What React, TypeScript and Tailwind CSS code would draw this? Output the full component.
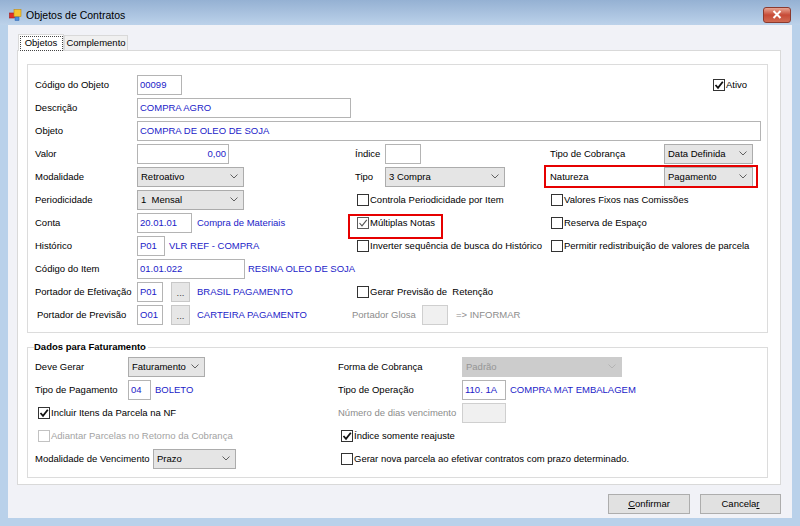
import React from "react";

type BoxProps = { w: string; value?: string; right?: boolean; disabled?: boolean };

const TextBox = ({ w, value, right, disabled }: BoxProps) => (
  <div
    className={`${w} h-[20px] shrink-0 border flex items-center px-[2px] ${
      disabled ? "border-[#cfcfcf] bg-[#f0f0f0]" : "border-[#b4b4b4] bg-white"
    } ${right ? "justify-end" : ""}`}
  >
    <span className="text-[#2222c8] whitespace-pre">{value}</span>
  </div>
);

const Combo = ({ w, value, disabled }: BoxProps) => (
  <div
    className={`${w} h-[20px] shrink-0 border flex items-center pl-[3px] pr-[5px] ${
      disabled ? "bg-[#cccccc] border-[#cccccc] text-[#959595]" : "bg-[#e5e5e5] border-[#acacac] text-black"
    }`}
  >
    <span className="flex-1 whitespace-pre">{value}</span>
    <svg width="8" height="5" viewBox="0 0 8 5">
      <path d="M0.5 0.5 L4 4 L7.5 0.5" fill="none" stroke={disabled ? "#b4b4b4" : "#606060"} strokeWidth="1" />
    </svg>
  </div>
);

interface CheckProps {
  label: string;
  checked?: boolean;
  soft?: boolean;
  disabled?: boolean;
}

const Check = ({ label, checked, soft, disabled }: CheckProps) => (
  <div className="flex items-center whitespace-pre">
    <span
      className={`w-[12px] h-[12px] shrink-0 border bg-white flex items-center justify-center ${
        disabled ? "border-[#c2c2c2]" : soft ? "border-[#5a5a5a]" : "border-[#333333]"
      }`}
    >
      {checked && (
        <svg width="10" height="10" viewBox="0 0 10 10">
          <path
            d="M1.5 5 L4 7.8 L8.8 1.8"
            fill="none"
            stroke={soft ? "#555555" : "#111111"}
            strokeWidth={soft ? 1.1 : 1.8}
          />
        </svg>
      )}
    </span>
    <span className={`ml-[1px] ${disabled ? "text-[#a3a3a3]" : "text-black"}`}>{label}</span>
  </div>
);

const Dots = () => (
  <div className="w-[19px] h-[20px] shrink-0 border border-[#c8c8c8] bg-[#e6e6e6] flex items-end justify-center pb-[3px] text-[#444] leading-none">
    ...
  </div>
);

const Row = ({ children }: { children: React.ReactNode }) => <div className="h-[23px] flex items-center">{children}</div>;

const Blue = ({ children, className = "" }: { children: React.ReactNode; className?: string }) => (
  <span className={`text-[#2222c8] whitespace-nowrap ${className}`}>{children}</span>
);

const AppIcon = () => (
  <svg width="13" height="12" viewBox="0 0 13 12">
    <rect x="0.5" y="4" width="5" height="5" fill="#e0302a" stroke="#a01818" strokeWidth="0.6" />
    <rect x="5" y="0.5" width="7" height="7" fill="#f6c431" stroke="#c08a10" strokeWidth="0.6" />
    <rect x="6" y="8" width="4" height="3.5" fill="#4a8ee0" stroke="#2a5fa8" strokeWidth="0.5" />
  </svg>
);

export default function App() {
  return (
    <div className="w-[800px] h-[526px] flex flex-col bg-[#b9d1ea] font-['Liberation_Sans',Arial,sans-serif] text-[9.5px] leading-[12px] text-black overflow-hidden">
      {/* barra de titulo */}
      <div className="h-[25px] shrink-0 flex items-center pt-[4px] pl-[9px] pr-[9px] bg-gradient-to-b from-[#95b1d3] to-[#bcd2ea]">
        <AppIcon />
        <span className="ml-[4px] text-[10.5px] text-black">Objetos de Contratos</span>
        <div className="ml-auto w-[28px] h-[16px] rounded-[3px] border border-[#8b3a2e] bg-gradient-to-b from-[#e6a594] via-[#c74a36] to-[#d06a52] flex items-center justify-center">
          <svg width="10" height="9" viewBox="0 0 10 9">
            <path d="M1.5 1 L8.5 8 M8.5 1 L1.5 8" stroke="#ffffff" strokeWidth="2" />
          </svg>
        </div>
      </div>

      <div className="flex-1 flex px-[8px]">
        <div className="flex-1 flex flex-col bg-[#f1f2f7] pt-[9px] pl-[9px] pr-[11px]">
          {/* abas */}
          <div className="h-[16px] flex items-end pl-[1px]">
            <div className="relative z-10 -mb-px w-[46px] h-[17px] border border-b-0 border-[#d9d9d9] bg-white flex items-center justify-center">
              <div className="w-[43px] h-[15px] border border-dotted border-[#444] flex items-center justify-center">Objetos</div>
            </div>
            <div className="w-[64px] h-[15px] border border-b-0 border-[#d9d9d9] bg-[#f0f0f0] flex items-center justify-center">
              Complemento
            </div>
          </div>

          <div className="h-[435px] border border-[#d9d9d9] bg-white pt-[13px] pl-[9px] pr-[12px]">
            {/* grupo principal */}
            <div className="h-[269px] border border-[#dcdcdc] pt-[8px] pl-[7px] flex flex-col">
              <Row>
                <div className="w-[102px] shrink-0">Código do Objeto</div>
                <div className="w-[215px] shrink-0 flex items-center">
                  <TextBox w="w-[45px]" value="00099" />
                </div>
                <div className="w-[196px] shrink-0" />
                <div className="pl-[165px]">
                  <Check label="Ativo" checked />
                </div>
              </Row>
              <Row>
                <div className="w-[102px] shrink-0">Descrição</div>
                <TextBox w="w-[214px]" value="COMPRA AGRO" />
              </Row>
              <Row>
                <div className="w-[102px] shrink-0">Objeto</div>
                <TextBox w="w-[624px]" value="COMPRA DE OLEO DE SOJA" />
              </Row>
              <Row>
                <div className="w-[102px] shrink-0">Valor</div>
                <div className="w-[215px] shrink-0 flex items-center">
                  <TextBox w="w-[92px]" value="0,00" right />
                </div>
                <div className="w-[196px] shrink-0 flex items-center pl-[3px]">
                  <span className="w-[30px] shrink-0">Índice</span>
                  <TextBox w="w-[36px]" />
                </div>
                <div className="flex items-center pl-[2px]">
                  <span className="w-[114px] shrink-0">Tipo de Cobrança</span>
                  <Combo w="w-[89px]" value="Data Definida" />
                </div>
              </Row>
              <Row>
                <div className="w-[102px] shrink-0">Modalidade</div>
                <div className="w-[215px] shrink-0 flex items-center">
                  <Combo w="w-[107px]" value="Retroativo" />
                </div>
                <div className="w-[196px] shrink-0 flex items-center pl-[3px]">
                  <span className="w-[30px] shrink-0">Tipo</span>
                  <Combo w="w-[120px]" value="3 Compra" />
                </div>
                <div className="relative flex items-center pl-[2px]">
                  <span className="w-[114px] shrink-0">Natureza</span>
                  <Combo w="w-[89px]" value="Pagamento" />
                  <span className="absolute -left-[4px] -top-[2px] w-[214px] h-[23px] border-2 border-[#e60000]" />
                </div>
              </Row>
              <Row>
                <div className="w-[102px] shrink-0">Periodicidade</div>
                <div className="w-[215px] shrink-0 flex items-center">
                  <Combo w="w-[107px]" value="1  Mensal" />
                </div>
                <div className="w-[196px] shrink-0 flex items-center pl-[5px]">
                  <Check label="Controla Periodicidade por Item" />
                </div>
                <div className="pl-[3px]">
                  <Check label="Valores Fixos nas Comissões" />
                </div>
              </Row>
              <Row>
                <div className="w-[102px] shrink-0">Conta</div>
                <div className="w-[215px] shrink-0 flex items-center">
                  <TextBox w="w-[55px]" value="20.01.01" />
                  <Blue className="ml-[5px]">Compra de Materiais</Blue>
                </div>
                <div className="relative w-[196px] shrink-0 flex items-center pl-[5px]">
                  <Check label="Múltiplas Notas" checked soft />
                  <span className="absolute -left-[4px] -top-[3px] w-[95px] h-[25px] border-2 border-[#e60000]" />
                </div>
                <div className="pl-[3px]">
                  <Check label="Reserva de Espaço" />
                </div>
              </Row>
              <Row>
                <div className="w-[102px] shrink-0">Histórico</div>
                <div className="w-[215px] shrink-0 flex items-center">
                  <TextBox w="w-[28px]" value="P01" />
                  <Blue className="ml-[4px]">VLR REF - COMPRA</Blue>
                </div>
                <div className="w-[196px] shrink-0 flex items-center pl-[5px]">
                  <Check label="Inverter sequência de busca do Histórico" />
                </div>
                <div className="pl-[3px]">
                  <Check label="Permitir redistribuição de valores de parcela" />
                </div>
              </Row>
              <Row>
                <div className="w-[102px] shrink-0">Código do Item</div>
                <div className="w-[215px] shrink-0 flex items-center">
                  <TextBox w="w-[108px]" value="01.01.022" />
                  <Blue className="ml-[3px]">RESINA OLEO DE SOJA</Blue>
                </div>
              </Row>
              <Row>
                <div className="w-[102px] shrink-0">Portador de Efetivação</div>
                <div className="w-[215px] shrink-0 flex items-center">
                  <TextBox w="w-[26px]" value="P01" />
                  <div className="ml-[8px]">
                    <Dots />
                  </div>
                  <Blue className="ml-[7px]">BRASIL PAGAMENTO</Blue>
                </div>
                <div className="w-[196px] shrink-0 flex items-center pl-[5px]">
                  <Check label="Gerar Previsão de  Retenção" />
                </div>
              </Row>
              <Row>
                <div className="w-[102px] shrink-0 pl-[2px]">Portador de Previsão</div>
                <div className="w-[215px] shrink-0 flex items-center">
                  <TextBox w="w-[26px]" value="O01" />
                  <div className="ml-[8px]">
                    <Dots />
                  </div>
                  <Blue className="ml-[7px]">CARTEIRA PAGAMENTO</Blue>
                </div>
                <div className="w-[196px] shrink-0 flex items-center text-[#8c8c8c]">
                  <span className="w-[70px] shrink-0">Portador Glosa</span>
                  <TextBox w="w-[26px]" disabled />
                  <span className="ml-[8px] whitespace-nowrap">=&gt; INFORMAR</span>
                </div>
              </Row>
            </div>

            {/* dados para faturamento */}
            <fieldset className="mt-[8px] border border-[#dcdcdc] px-[7px] pb-[7px]">
              <legend className="font-bold px-0 ml-[-1px] pr-[2px] leading-[12px]">Dados para Faturamento</legend>
              <div className="pt-[2px] flex flex-col">
                <Row>
                  <div className="w-[303px] shrink-0 flex items-center">
                    <span className="w-[93px] shrink-0">Deve Gerar</span>
                    <Combo w="w-[77px]" value="Faturamento" />
                  </div>
                  <span className="w-[124px] shrink-0">Forma de Cobrança</span>
                  <Combo w="w-[160px]" value="Padrão" disabled />
                </Row>
                <Row>
                  <div className="w-[303px] shrink-0 flex items-center">
                    <span className="w-[93px] shrink-0">Tipo de Pagamento</span>
                    <TextBox w="w-[23px]" value="04" />
                    <Blue className="ml-[4px]">BOLETO</Blue>
                  </div>
                  <span className="w-[124px] shrink-0">Tipo de Operação</span>
                  <TextBox w="w-[44px]" value="110. 1A" />
                  <Blue className="ml-[4px]">COMPRA MAT EMBALAGEM</Blue>
                </Row>
                <Row>
                  <div className="w-[303px] shrink-0 flex items-center pl-[3px]">
                    <Check label="Incluir Itens da Parcela na NF" checked />
                  </div>
                  <span className="w-[124px] shrink-0 text-[#8c8c8c]">Número de dias vencimento</span>
                  <TextBox w="w-[44px]" disabled />
                </Row>
                <Row>
                  <div className="w-[303px] shrink-0 flex items-center pl-[3px]">
                    <Check label="Adiantar Parcelas no Retorno da Cobrança" disabled />
                  </div>
                  <div className="pl-[3px]">
                    <Check label="Índice somente reajuste" checked />
                  </div>
                </Row>
                <Row>
                  <div className="w-[303px] shrink-0 flex items-center">
                    <span className="w-[118px] shrink-0">Modalidade de Vencimento</span>
                    <Combo w="w-[83px]" value="Prazo" />
                  </div>
                  <div className="pl-[3px]">
                    <Check label="Gerar nova parcela ao efetivar contratos com prazo determinado." />
                  </div>
                </Row>
              </div>
            </fieldset>
          </div>

          {/* botoes */}
          <div className="mt-[9px] flex justify-end gap-[10px]">
            <button className="w-[82px] h-[20px] border border-[#adadad] bg-[#e1e1e1] text-[9.5px]">
              <span className="underline">C</span>onfirmar
            </button>
            <button className="w-[81px] h-[20px] border border-[#adadad] bg-[#e1e1e1] text-[9.5px]">
              Cancela<span className="underline">r</span>
            </button>
          </div>
        </div>
      </div>
      <div className="h-[8px] shrink-0" />
    </div>
  );
}
